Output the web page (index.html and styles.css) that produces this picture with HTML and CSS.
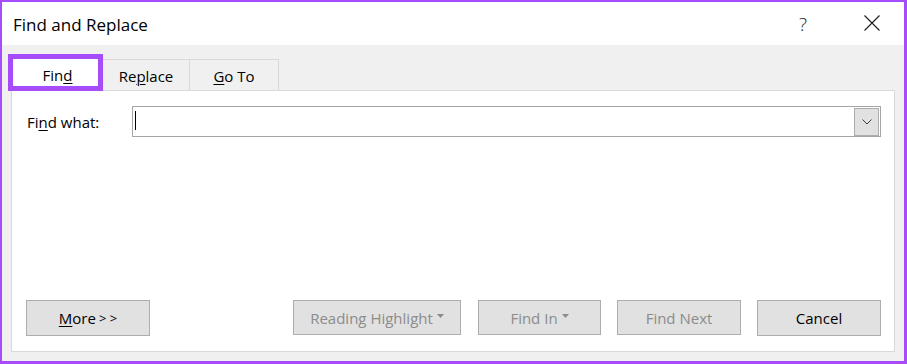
FILE: index.html
```html
<!DOCTYPE html>
<html>
<head>
<meta charset="utf-8">
<link rel="stylesheet" href="styles.css">
</head>
<body>
<div class="window">
  <div class="titlebar">
    <div class="title">Find and Replace</div>
    <div class="title-actions">
      <span class="help">?</span>
      <svg class="close" width="16" height="16" viewBox="0 0 16 16"><path d="M0.5 0.5 L15.5 15.5 M15.5 0.5 L0.5 15.5" stroke="#1a1a1a" stroke-width="1.1" fill="none"/></svg>
    </div>
  </div>
  <div class="content">
    <div class="tabs">
      <div class="tab tab-active">Fin<u>d</u><span class="highlight"></span></div>
      <div class="tab">Re<u>p</u>lace</div>
      <div class="tab"><u>G</u>o To</div>
    </div>
    <div class="panel">
      <div class="find-row">
        <label class="label">Fi<u>n</u>d what:</label>
        <div class="combo">
          <span class="caret"></span>
          <span class="combo-btn"><svg width="10" height="6" viewBox="0 0 10 6"><polyline points="0.5,0.5 5,5 9.5,0.5" fill="none" stroke="#3c3c3c" stroke-width="1"/></svg></span>
        </div>
      </div>
      <div class="buttons">
        <div class="btn btn-more"><u>M</u>ore <span class="arrows">&gt; &gt;</span></div>
        <div class="btn-group">
          <div class="btn btn-disabled btn-rh">Reading Highlight<svg class="tri" width="7" height="4" viewBox="0 0 7 4"><polygon points="0,0 7,0 3.5,4" fill="#8c8c8c"/></svg></div>
          <div class="btn btn-disabled btn-fi">Find In<svg class="tri" width="7" height="4" viewBox="0 0 7 4"><polygon points="0,0 7,0 3.5,4" fill="#8c8c8c"/></svg></div>
          <div class="btn btn-disabled">Find Next</div>
          <div class="btn">Cancel</div>
        </div>
      </div>
    </div>
  </div>
</div>
</body>
</html>
```
FILE: styles.css
```css
* { box-sizing: border-box; }
html, body { margin: 0; padding: 0; background: #ffffff; }
body { font-family: "Open Sans", "Noto Sans", sans-serif; color: #000; }

.window {
  width: 907px;
  height: 364px;
  border-style: solid;
  border-color: #a64cfb;
  border-width: 2px 3px 3px 2px;
  display: flex;
  flex-direction: column;
  background: #f0f0f0;
}

.titlebar {
  height: 43px;
  background: #ffffff;
  display: flex;
  align-items: center;
  justify-content: space-between;
  padding: 2px 0 0 11px;
}
.title { font-size: 17px; line-height: 22px; color: #000; }
.title-actions { display: flex; align-items: center; height: 100%; }
.help { font-size: 19px; font-weight: 300; line-height: 22px; color: #1a1a1a; margin-right: 57px; margin-top: -2px; }
.close { margin-right: 24px; margin-top: -3px; }

.content {
  flex: 1;
  display: flex;
  flex-direction: column;
  padding: 9px 9px 9px 9px;
}

.tabs {
  height: 36px;
  display: flex;
  align-items: flex-end;
  padding-left: 1px;
}
.tab {
  height: 31px;
  border: 1px solid #d9d9d9;
  border-bottom: none;
  border-left: none;
  background: #f0f0f0;
  font-size: 15px;
  line-height: 20px;
  padding-top: 6px;
  text-align: center;
  width: 87px;
}
.tab:nth-child(3) { width: 89px; }
.tab u, .label u, .btn u { text-underline-offset: 2px; text-decoration-thickness: 1px; }
.tab-active {
  position: relative;
  z-index: 1;
  width: 91px;
  height: 35px;
  margin-bottom: -1px;
  background: #ffffff;
  border: none;
  padding-top: 9px;
}
.highlight {
  position: absolute;
  left: -4px;
  top: -2px;
  width: 95px;
  height: 37px;
  border: 5px solid #a64cfb;
}

.panel {
  flex: 1;
  background: #ffffff;
  border: 1px solid #d9d9d9;
  display: flex;
  flex-direction: column;
  padding: 15px 13px 15px 14px;
}

.find-row { display: flex; align-items: center; }
.label { width: 106px; padding-left: 1px; font-size: 15px; line-height: 20px; }
.combo {
  flex: 1;
  height: 31px;
  border: 1px solid #a6a6a6;
  display: flex;
  align-items: center;
  justify-content: space-between;
  padding: 0 1px 0 2px;
}
.caret { width: 1px; height: 19px; background: #000; margin-top: -2px; }
.combo-btn {
  width: 25px;
  height: 28px;
  background: #e1e1e1;
  border: 1px solid #adadad;
  display: flex;
  align-items: center;
  justify-content: center;
}

.buttons {
  margin-top: auto;
  display: flex;
  justify-content: space-between;
  align-items: flex-end;
}
.btn-group { display: flex; gap: 16px; }
.btn {
  width: 124px;
  height: 36px;
  background: #e1e1e1;
  border: 1px solid #adadad;
  font-size: 15px;
  line-height: 20px;
  display: flex;
  align-items: center;
  justify-content: center;
  color: #000;
}
.btn-disabled { color: #8c8c8c; height: 35px; }
.btn-rh { width: 168px; margin-right: 1px; }
.btn-fi { width: 123px; }
.tri { margin-left: 4px; margin-top: -4px; }
.arrows { font-size: 13px; margin-left: 3px; }
```
